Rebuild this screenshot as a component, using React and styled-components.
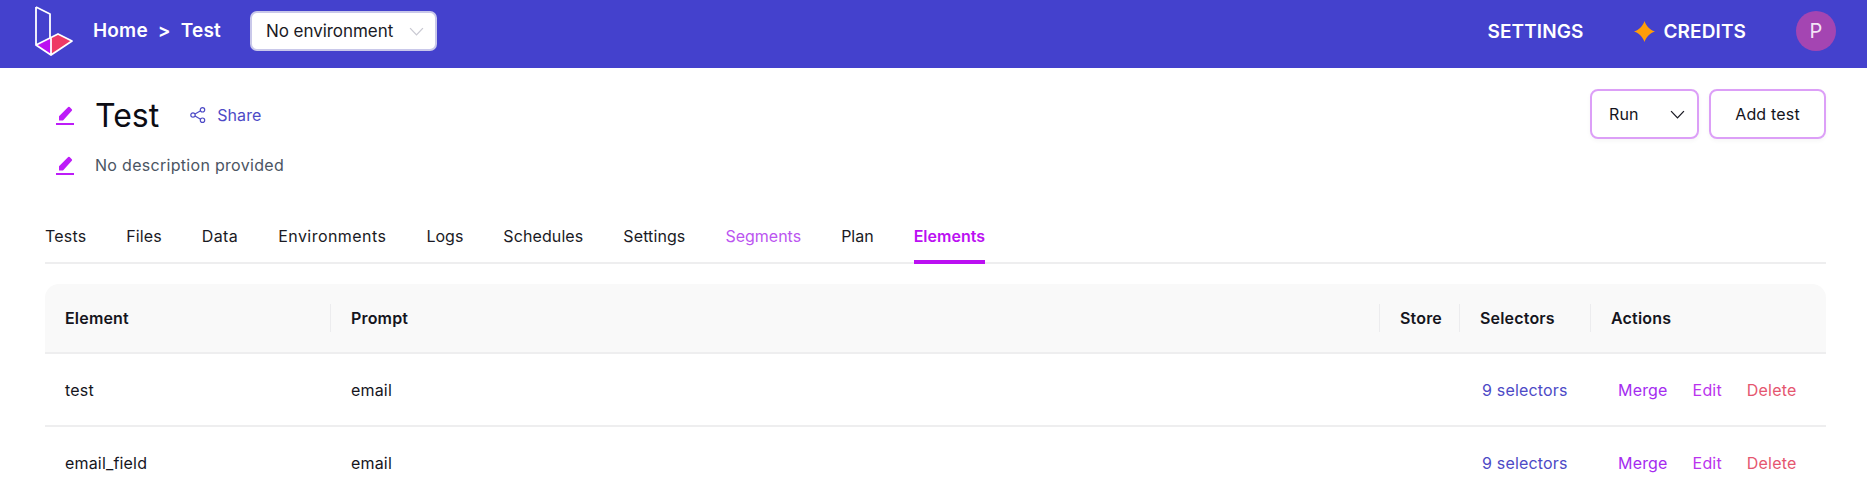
import React from "react";
import styled, { createGlobalStyle } from "styled-components";

const Global = createGlobalStyle`
  html, body { margin: 0; padding: 0; background: #fff; overflow: hidden; }
  body { font-family: "Inter", "Liberation Sans", sans-serif; color: #16161d; letter-spacing: 0.18px; }
  * { box-sizing: border-box; }
`;

const Page = styled.div`
  width: 1867px;
  height: 496px;
  overflow: hidden;
`;

const TopBar = styled.header`
  height: 68px;
  background: #4441cd;
  display: flex;
  align-items: center;
  padding: 0 31px 6px 33px;
  color: #fff;
`;
const Logo = styled.svg`
  width: 42px;
  height: 54px;
  margin-right: 18px;
`;
const Crumbs = styled.div`
  display: flex;
  gap: 10px;
  font-size: 19px;
  font-weight: 600;
  margin-right: 29px;
  margin-bottom: 1px;
`;
const EnvSelect = styled.div`
  width: 187px;
  height: 40px;
  background: #fff;
  border-radius: 7px;
  border: 2px solid #c9c8ea;
  display: flex;
  align-items: center;
  justify-content: space-between;
  padding: 0 11px 0 14px;
  color: #1a1a24;
  font-size: 17px;
  letter-spacing: -0.05px;
`;
const Spacer = styled.div`
  flex: 1;
`;
const NavLink = styled.div`
  display: flex;
  align-items: center;
  gap: 9px;
  font-size: 19px;
  font-weight: 600;
  letter-spacing: 0.1px;
  margin-right: ${(p) => p.$gap}px;
`;
const Avatar = styled.div`
  width: 40px;
  height: 40px;
  border-radius: 50%;
  background: #a445b2;
  display: flex;
  align-items: center;
  justify-content: center;
  font-size: 20px;
  color: #f3e4f6;
`;

const TitleBlock = styled.section`
  display: flex;
  justify-content: space-between;
  padding: 21px 41px 0 56px;
  height: 141px;
`;
const TitleCol = styled.div`
  display: flex;
  flex-direction: column;
`;
const TitleRow = styled.div`
  display: flex;
  align-items: center;
  height: 48px;
  margin-top: 2px;
`;
const DescRow = styled.div`
  display: flex;
  align-items: center;
  height: 30px;
  margin-top: 11px;
  font-size: 16px;
  letter-spacing: 0.3px;
  color: #4b5563;
`;
const EditIcon = styled.svg`
  width: 18px;
  height: 20px;
  margin-right: 21px;
  color: #bd1cf8;
`;
const Title = styled.h1`
  margin: 0 31px 0 0;
  font-size: 32px;
  font-weight: 400;
  letter-spacing: 0;
  color: #0c0c14;
`;
const Share = styled.div`
  display: flex;
  align-items: center;
  gap: 11px;
  font-size: 16px;
  letter-spacing: 0.1px;
  color: #4d4ac6;
`;
const Actions = styled.div`
  display: flex;
  gap: 10px;
  align-items: flex-start;
`;
const OutlineButton = styled.div`
  height: 50px;
  width: ${(p) => p.$w}px;
  border: 2px solid #dc9ff7;
  border-radius: 8px;
  background: #fff;
  display: flex;
  align-items: center;
  justify-content: ${(p) => (p.$split ? "space-between" : "center")};
  padding: ${(p) => (p.$split ? "0 12px 0 17px" : "0")};
  font-size: 16px;
  color: #14141c;
  box-shadow: 0 2px 4px rgba(0, 0, 0, 0.04);
`;

const Tabs = styled.nav`
  margin: 0 41px 0 45px;
  height: 55px;
  display: flex;
  gap: 40px;
  border-bottom: 2px solid #eeeeef;
`;
const Tab = styled.div`
  height: 55px;
  padding-top: 17px;
  font-size: 16px;
  letter-spacing: ${(p) => p.$spacing ?? 0.18}px;
  color: ${(p) => p.$color || "#1a1a24"};
  font-weight: ${(p) => (p.$active ? 600 : 400)};
  border-bottom: ${(p) => (p.$active ? "4px solid #bb10f2" : "none")};
`;

const Table = styled.div`
  margin: 20px 41px 0 45px;
`;
const Row = styled.div`
  display: grid;
  grid-template-columns: 286px 1049px 80px 131px 235px;
  align-items: center;
  height: ${(p) => p.$h}px;
  border-bottom: 2px solid #eeeeef;
`;
const HeadRow = styled(Row)`
  background: #f9f9f9;
  border-radius: 14px 14px 0 0;
`;
const HeadCell = styled.div`
  height: 28px;
  display: flex;
  align-items: center;
  padding-left: 20px;
  font-size: 16px;
  font-weight: 600;
  color: #15151d;
  border-right: ${(p) => (p.$last ? "none" : "1px solid #ececee")};
`;
const Cell = styled.div`
  padding-left: ${(p) => p.$pad || 20}px;
  font-size: 16px;
  color: #15151d;
`;
const LinkText = styled.span`
  color: #4d4ac6;
`;
const ActionCell = styled.div`
  padding-left: 27px;
  display: flex;
  gap: 25px;
  font-size: 16px;
`;
const ActionLink = styled.span`
  color: ${(p) => p.$color};
`;

const Pencil = () => (
  <EditIcon viewBox="0 0 18 20">
    <path d="M3 15.5v-4.2L12.2 2a1 1 0 0 1 1.4 0l2.2 2.3a1 1 0 0 1 0 1.4L7 15.5z" fill="currentColor" />
    <rect x="0" y="18" width="18" height="2" fill="currentColor" />
  </EditIcon>
);

const Chevron = ({ color, size = 15 }) => (
  <svg width={size} height={size * 0.6} viewBox="0 0 14 8.4" fill="none">
    <path d="M1 1l6 6.4L13 1" stroke={color} strokeWidth="1.2" />
  </svg>
);

const rows = [
  { name: "test", prompt: "email" },
  { name: "email_field", prompt: "email" },
];

export default function App() {
  return (
    <Page>
      <Global />
      <TopBar>
        <Logo viewBox="0 0 42 54">
          <path d="M3 41 18 33.500V51z" fill="#bb10f2" />
          <path d="M18 33.500 25 30 39 37 18 51z" fill="#ee3a66" />
          <path
            d="M3 3 17 10V34M3 3V41L18 51 39 37 25 30 3 41M18 34V51"
            fill="none"
            stroke="#fff"
            strokeWidth="1.8"
            strokeLinejoin="round"
          />
        </Logo>
        <Crumbs>
          <span>Home</span>
          <span>&gt;</span>
          <span>Test</span>
        </Crumbs>
        <EnvSelect>
          <span>No environment</span>
          <Chevron color="#c9c9d2" />
        </EnvSelect>
        <Spacer />
        <NavLink $gap={50}>SETTINGS</NavLink>
        <NavLink $gap={50}>
          <svg width="21" height="21" viewBox="0 0 20 20">
            <path d="M10 0c1.500 4.500 4.500 8 10 10-5.500 2-8.500 5.500-10 10-1.500-4.500-4.500-8-10-10 5.500-2 8.500-5.500 10-10z" fill="#ff9d0a" />
          </svg>
          CREDITS
        </NavLink>
        <Avatar>P</Avatar>
      </TopBar>
      <TitleBlock>
        <TitleCol>
          <TitleRow>
            <Pencil />
            <Title>Test</Title>
            <Share>
              <svg width="16" height="16" viewBox="0 0 16 16" fill="none" stroke="currentColor" strokeWidth="1.2">
                <circle cx="3" cy="8" r="2.2" />
                <circle cx="12.500" cy="2.800" r="2.2" />
                <circle cx="12.500" cy="13.200" r="2.2" />
                <path d="M5 7l5.600-3.200M5 9l5.600 3.200" />
              </svg>
              Share
            </Share>
          </TitleRow>
          <DescRow>
            <Pencil />
            No description provided
          </DescRow>
        </TitleCol>
        <Actions>
          <OutlineButton $w={109} $split>
            Run
            <Chevron color="#1a1a24" />
          </OutlineButton>
          <OutlineButton $w={117}>Add test</OutlineButton>
        </Actions>
      </TitleBlock>
      <Tabs>
        <Tab>Tests</Tab>
        <Tab $spacing={0.1}>Files</Tab>
        <Tab $spacing={0.4}>Data</Tab>
        <Tab $spacing={0.45}>Environments</Tab>
        <Tab $spacing={0}>Logs</Tab>
        <Tab $spacing={0.1}>Schedules</Tab>
        <Tab $spacing={0.1}>Settings</Tab>
        <Tab $color="#bb55f0" $spacing={0}>Segments</Tab>
        <Tab $spacing={0}>Plan</Tab>
        <Tab $active $color="#bb10f2" $spacing={0}>Elements</Tab>
      </Tabs>
      <Table>
        <HeadRow $h={70}>
          <HeadCell>Element</HeadCell>
          <HeadCell>Prompt</HeadCell>
          <HeadCell>Store</HeadCell>
          <HeadCell>Selectors</HeadCell>
          <HeadCell $last>Actions</HeadCell>
        </HeadRow>
        {rows.map((r) => (
          <Row $h={73} key={r.name}>
            <Cell>{r.name}</Cell>
            <Cell>{r.prompt}</Cell>
            <Cell />
            <Cell $pad={22}>
              <LinkText>9 selectors</LinkText>
            </Cell>
            <ActionCell>
              <ActionLink $color="#a52cf0">Merge</ActionLink>
              <ActionLink $color="#bb33ee">Edit</ActionLink>
              <ActionLink $color="#e5566f">Delete</ActionLink>
            </ActionCell>
          </Row>
        ))}
      </Table>
    </Page>
  );
}
